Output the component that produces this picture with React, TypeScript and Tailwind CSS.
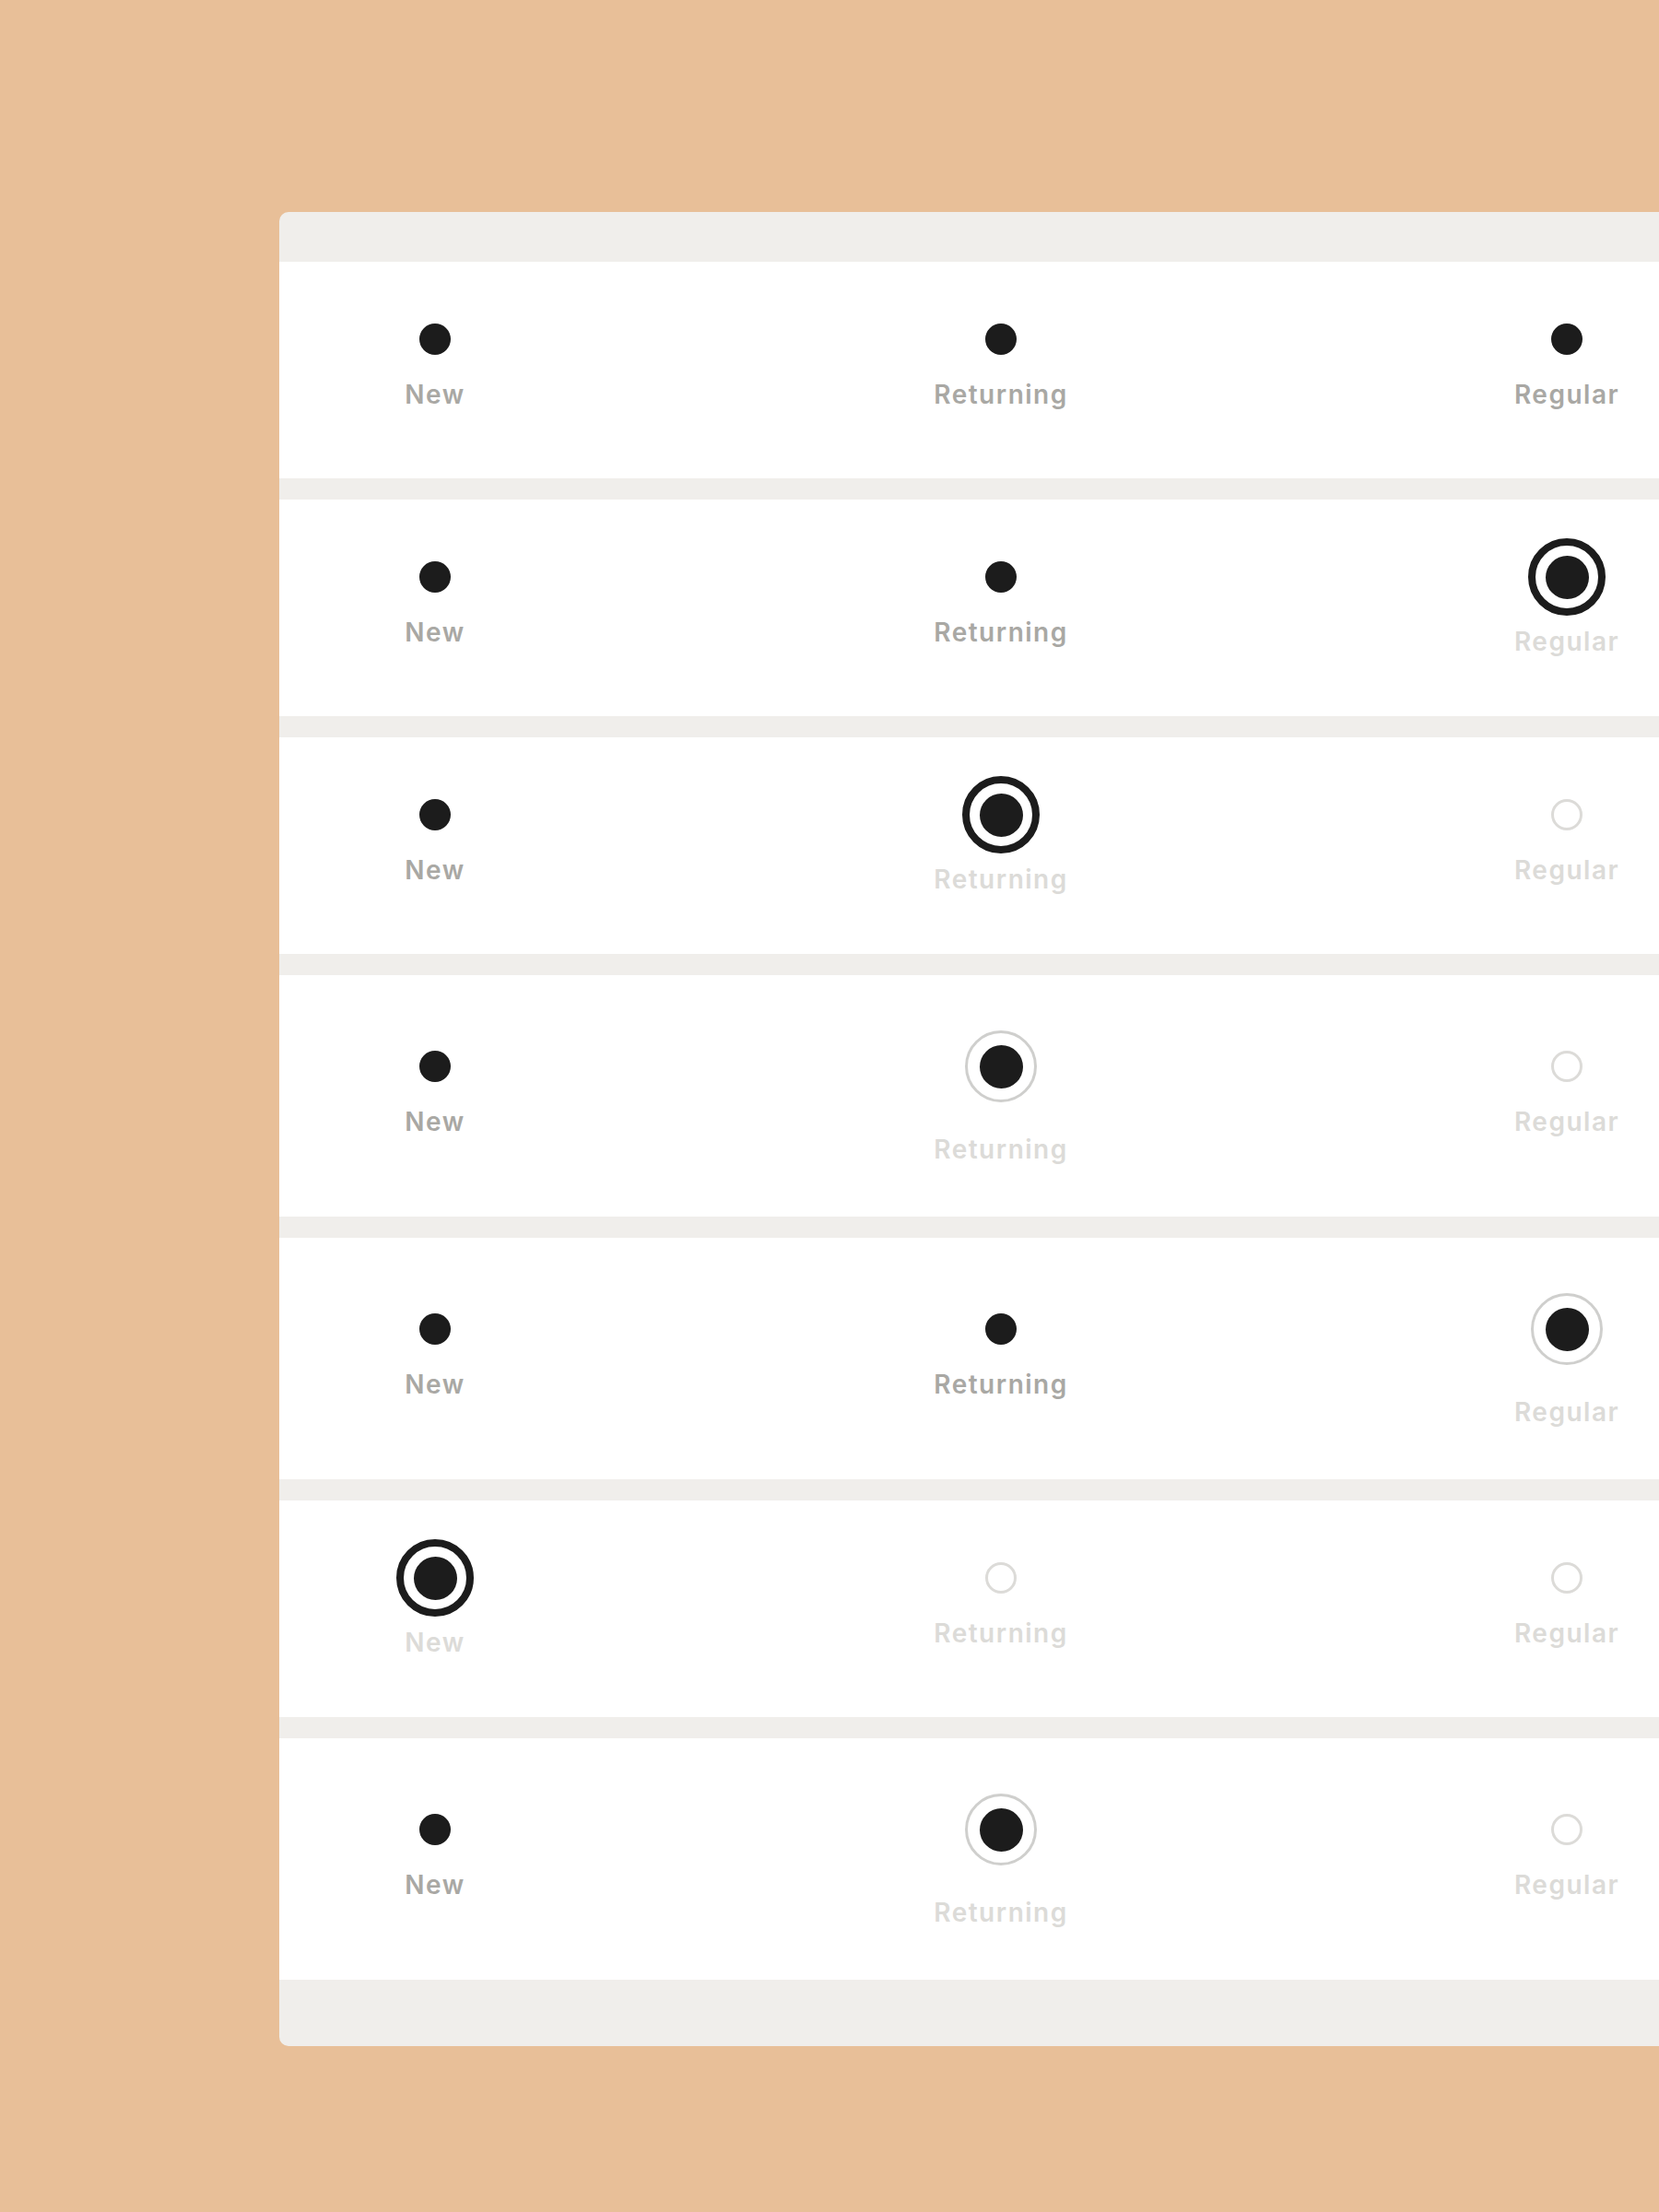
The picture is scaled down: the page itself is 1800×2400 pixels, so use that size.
type State = "idle" | "active" | "hover" | "off";

const labels = ["New", "Returning", "Regular"];

const rows: { tall: boolean; items: State[] }[] = [
  { tall: false, items: ["idle", "idle", "idle"] },
  { tall: false, items: ["idle", "idle", "active"] },
  { tall: false, items: ["idle", "active", "off"] },
  { tall: true, items: ["idle", "hover", "off"] },
  { tall: true, items: ["idle", "idle", "hover"] },
  { tall: false, items: ["active", "off", "off"] },
  { tall: true, items: ["idle", "hover", "off"] },
];

function Dot({ state }: { state: State }) {
  if (state === "active") {
    return (
      <div className="w-[84px] h-[84px] rounded-full border-[8px] border-[#1c1c1c] flex items-center justify-center">
        <div className="w-[47px] h-[47px] rounded-full bg-[#1c1c1c]" />
      </div>
    );
  }
  if (state === "hover") {
    return (
      <div className="w-[78px] h-[78px] rounded-full border-[3px] border-[#cfcfcd] flex items-center justify-center">
        <div className="w-[47px] h-[47px] rounded-full bg-[#1c1c1c]" />
      </div>
    );
  }
  if (state === "off") {
    return <div className="w-[34px] h-[34px] rounded-full border-[3px] border-[#dcdbd8]" />;
  }
  return <div className="w-[34px] h-[34px] rounded-full bg-[#1c1c1c]" />;
}

function Option({ label, state }: { label: string; state: State }) {
  const spacing = state === "active" ? "mt-[14px]" : state === "hover" ? "mt-[34px]" : "mt-[4px]";
  const color = state === "idle" ? "text-[#a9a8a4]" : "text-[#dcdbd8]";
  return (
    <div className="w-[160px] flex flex-col items-center">
      <div className="h-[84px] w-[84px] flex items-center justify-center">
        <Dot state={state} />
      </div>
      <span className={`${spacing} ${color} text-[28px] leading-[28px] font-semibold tracking-[1.5px]`}>
        {label}
      </span>
    </div>
  );
}

export default function App() {
  return (
    <div
      className="w-[1800px] min-h-[2400px] bg-[#e8bf98] overflow-hidden pt-[230px] pl-[303px]"
      style={{ fontFamily: "Inter, 'Noto Sans', sans-serif" }}
    >
      <div className="w-[1566px] rounded-[10px] bg-[#f0eeeb] pt-[54px] pb-[72px] flex flex-col gap-[23px]">
        {rows.map((row, i) => (
          <div
            key={i}
            className={`bg-white flex justify-between px-[89px] ${row.tall ? "h-[262px] pt-[57px]" : "h-[235px] pt-[42px]"}`}
          >
            {row.items.map((s, j) => (
              <Option key={j} label={labels[j]} state={s} />
            ))}
          </div>
        ))}
      </div>
    </div>
  );
}
